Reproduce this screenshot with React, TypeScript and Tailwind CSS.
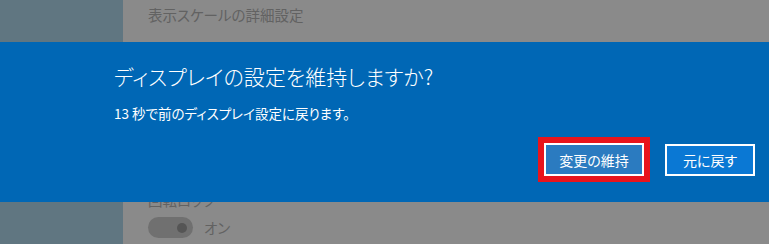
const jp = "font-['Segoe_UI','Noto_Sans_CJK_JP',sans-serif] [font-feature-settings:'palt']";

export default function App() {
  return (
    <div className={`relative w-[769px] h-[244px] overflow-hidden flex ${jp}`}>
      {/* dimmed settings page behind the dialog */}
      <div className="w-[123px] h-full bg-[#607681]" />
      <div className="flex-1 h-full bg-[#8a8a8a] pl-[25px] text-[#626262]">
        <div className="pt-[5px] text-[14.5px] leading-[20px]">表示スケールの詳細設定</div>
        <div className="mt-[165px] text-[14.5px] leading-[20px]">回転ロック</div>
        <div className="mt-[7px] flex items-center gap-[11px]">
          <div className="w-[45px] h-[21px] rounded-full bg-[#707070] flex items-center justify-end pr-[6px]">
            <div className="w-[10px] h-[10px] rounded-full bg-[#555555]" />
          </div>
          <span className="text-[14.5px] leading-[20px]">オン</span>
        </div>
      </div>

      {/* keep-display-settings dialog */}
      <div className="absolute left-0 right-0 top-[42px] h-[160px] bg-[#0067b5] text-white flex flex-col">
        <div className="pl-[114px] pt-[20px]">
          <h1 className="text-[21px] leading-[28px] font-light">ディスプレイの設定を維持しますか?</h1>
          <p className="mt-[14px] text-[13.5px] leading-[18px]">13 秒で前のディスプレイ設定に戻ります。</p>
        </div>
        <div className="mt-[15px] pr-[14px] flex items-center justify-end gap-[15px]">
          <div className="border-[6px] border-[#e8141c]">
            <button className="w-[100px] h-[33px] border-2 border-white bg-[#2b7bc0] text-[14px] leading-none text-white">
              変更の維持
            </button>
          </div>
          <button className="w-[90px] h-[32px] border-2 border-white bg-[#0a78d4] text-[14px] leading-none text-white">
            元に戻す
          </button>
        </div>
      </div>
    </div>
  );
}
